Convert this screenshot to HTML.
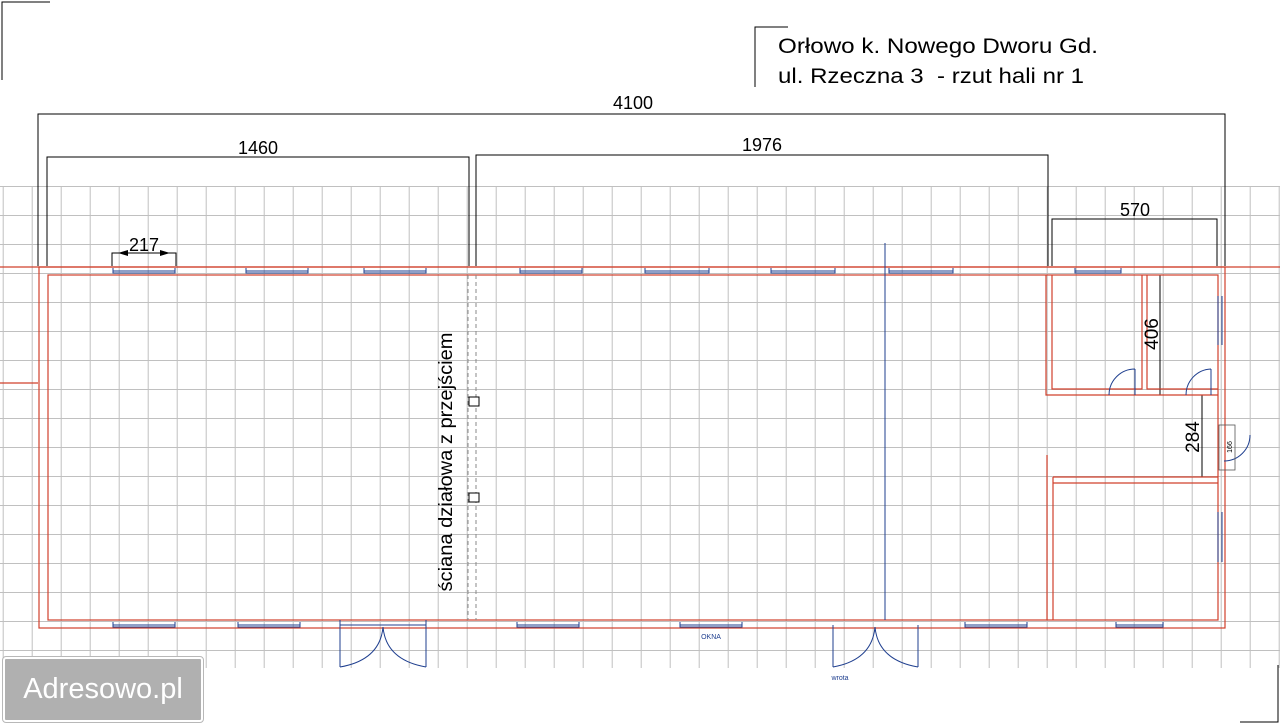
<!DOCTYPE html>
<html><head><meta charset="utf-8"><style>
body{margin:0;background:#fff;width:1280px;height:725px;overflow:hidden;position:relative;font-family:"Liberation Sans",sans-serif}
svg{position:absolute;left:0;top:0}
.logo{position:absolute;left:3px;top:657px;width:196px;height:61px;background:#b0b0b0;border:2px solid #fff;outline:1px solid #b8b8b8;border-radius:3px;color:#fff;font-size:29px;line-height:61px;text-align:center}
</style></head><body>
<svg width="1280" height="725" viewBox="0 0 1280 725" font-family="Liberation Sans, sans-serif">
<defs><pattern id="g" x="2.7" y="186" width="29" height="29" patternUnits="userSpaceOnUse">
<path d="M0.5 0V29M0 0.5H29" stroke="#c0c0c0" stroke-width="1" fill="none"/></pattern></defs>
<rect x="0" y="186" width="1280" height="482" fill="url(#g)"/>
<g stroke="#000" fill="none" stroke-width="1">
<path d="M2 80V2H50"/><path d="M755 87V27H788"/>
<path d="M38 266V114H1225V266"/>
<path d="M47 266V157H469V266"/>
<path d="M476 266V155H1048V266"/>
<path d="M1052 266V219H1217V266"/>
<path d="M112 266V253H176V266"/><path d="M118 253H170"/>
<path d="M1160 275V395M1202 395V477"/>
</g>
<polygon points="118,253 128,250 128,256" fill="#000"/><polygon points="170,253 160,250 160,256" fill="#000"/>
<g stroke="#d0402c" fill="none" stroke-width="1.2">
<path d="M0 267H1280M0 383H38"/>
<rect x="39" y="267" width="1186" height="361"/>
<rect x="48" y="275" width="1170" height="345"/>
<path d="M1046 275V395H1218M1052 275V389H1142V275M1147 275V389H1218"/>
<path d="M1047 455V620M1053 477V620M1053 477H1218M1053 483H1218"/>
</g>
<g stroke="#888" stroke-dasharray="4,3" fill="none"><path d="M468 275V620M476 275V620"/></g>
<rect x="469" y="397" width="10" height="9" fill="#fff" stroke="#000"/>
<rect x="469" y="493" width="10" height="9" fill="#fff" stroke="#000"/>
<g stroke="#1f3f8f" fill="none" stroke-width="1">
<path d="M885 243V620"/>
<path d="M113 268V273H175V268M113 271H175"/>
<path d="M246 268V273H308V268M246 271H308"/>
<path d="M364 268V273H426V268M364 271H426"/>
<path d="M520 268V273H582V268M520 271H582"/>
<path d="M645 268V273H709V268M645 271H709"/>
<path d="M771 268V273H835V268M771 271H835"/>
<path d="M889 268V273H953V268M889 271H953"/>
<path d="M1075 268V273H1121V268M1075 271H1121"/>
<path d="M113 622V627H175V622M113 625H175"/>
<path d="M238 622V627H300V622M238 625H300"/>
<path d="M517 622V627H579V622M517 625H579"/>
<path d="M680 622V627H742V622M680 625H742"/>
<path d="M965 622V627H1027V622M965 625H1027"/>
<path d="M1116 622V627H1163V622M1116 625H1163"/>
<path d="M1218 296V345M1222 296V345M1218 512V562M1222 512V562"/>
<path d="M340 620V667M426 620V667M340 625H426M383 627Q380 660 340 667M383 627Q386 660 426 667"/>
<path d="M833 625V667M918 625V667M875 627Q872 660 833 667M875 627Q878 660 918 667"/>
<path d="M1135 369V395M1135 369A26 26 0 0 0 1109 395"/>
<path d="M1211 369V395M1211 369A26 26 0 0 0 1186 395"/>
<path d="M1224 461A26 26 0 0 0 1250 435"/>
</g>
<rect x="1219" y="425" width="16" height="45" fill="none" stroke="#555" stroke-width="0.8"/>
<g fill="#000">
<text x="778" y="53" font-size="21" textLength="320" lengthAdjust="spacingAndGlyphs">Orłowo k. Nowego Dworu Gd.</text>
<text x="778" y="83" font-size="21" textLength="306" lengthAdjust="spacingAndGlyphs" xml:space="preserve">ul. Rzeczna 3  - rzut hali nr 1</text>
<text x="633" y="109" font-size="18" text-anchor="middle">4100</text>
<text x="258" y="154" font-size="18" text-anchor="middle">1460</text>
<text x="762" y="151" font-size="18" text-anchor="middle">1976</text>
<text x="1135" y="216" font-size="18" text-anchor="middle">570</text>
<text x="144" y="251" font-size="18" text-anchor="middle">217</text>
<text font-size="19" text-anchor="middle" transform="translate(1158,334) rotate(-90)">406</text>
<text font-size="19" text-anchor="middle" transform="translate(1199,437) rotate(-90)">284</text>
<text font-size="19" text-anchor="middle" textLength="259" lengthAdjust="spacingAndGlyphs" transform="translate(452,462) rotate(-90)">ściana działowa z przejściem</text>
<text font-size="7" text-anchor="middle" transform="translate(1232,447) rotate(-90)">166</text>
<text x="711" y="639" font-size="7" fill="#1f3f8f" text-anchor="middle">OKNA</text>
<text x="840" y="680" font-size="7" fill="#1f3f8f" text-anchor="middle">wrota</text>
</g>
<path d="M1240 722H1278V665" stroke="#000" fill="none"/>
</svg>
<div class="logo">Adresowo.pl</div>
</body></html>
